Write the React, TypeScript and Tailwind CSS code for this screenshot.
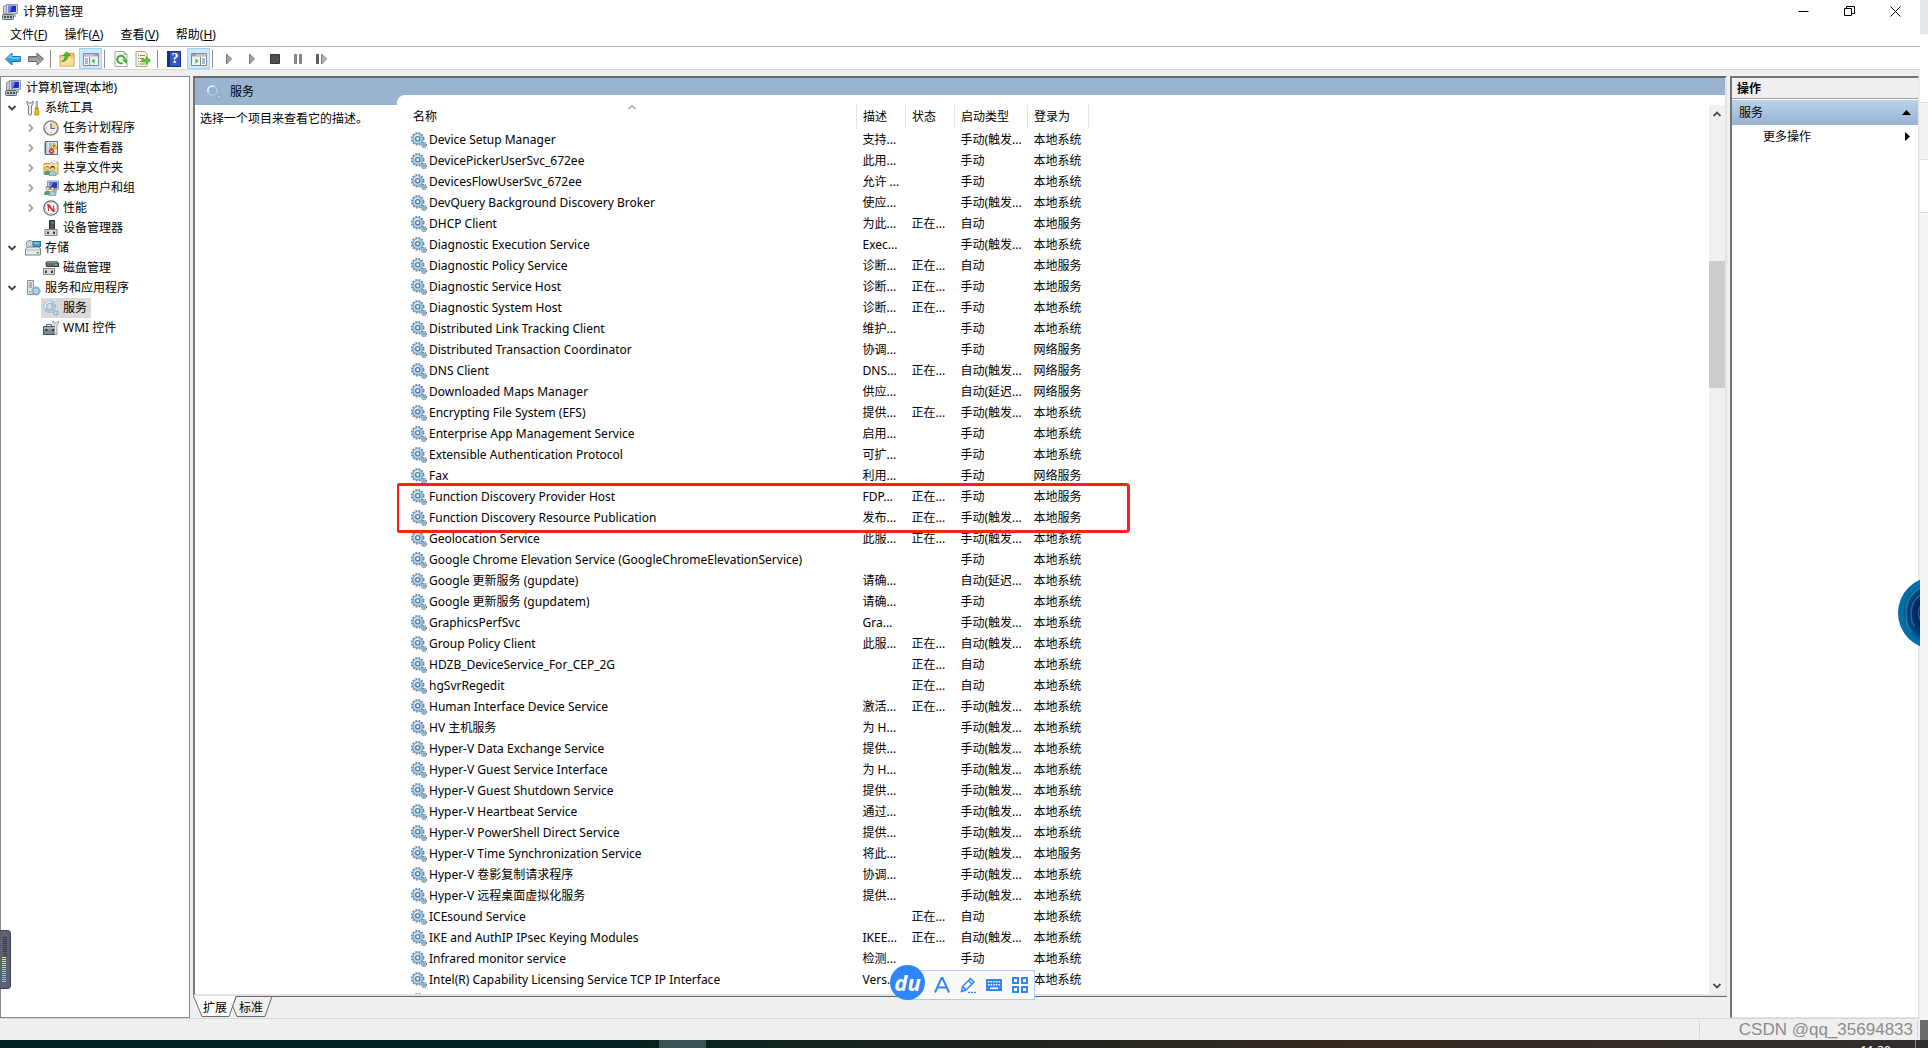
import React, { FunctionComponent, ReactNode } from "react";
import clsx from "clsx";

type IconComponent = FunctionComponent<{ className?: string }>;

const Svg: FunctionComponent<{ className?: string; children: ReactNode }> = ({
  className,
  children,
}) => (
  <svg
    viewBox="0 0 16 16"
    className={clsx("w-4 h-4 shrink-0", className)}
    fill="none"
    aria-hidden="true"
  >
    {children}
  </svg>
);

const ComputerIcon: IconComponent = (props) => (
  <Svg {...props}>
    <path d="M1.5 2.5 5 1v8.5L1.5 10.5z" fill="#c9ced2" stroke="#8d9296" />
    <path d="M4.500 .5h11v9l-11 .500z" fill="#d9dadb" stroke="#9a9da0" />
    <path d="M6 1.800h8v6L6 8.5z" fill="#1b2bd0" />
    <path d="M6 1.800h4L8 8.300 6 8.5z" fill="#6f8bf2" />
    <path d="M12 10h2v3h-2z" fill="#aeb3b7" />
    <rect x="0.5" y="10.5" width="11" height="5" rx="1" fill="#b3c0c6" stroke="#5d6a72" />
    <path d="M2 12h2v2H2zM5 12h2v2H5zM8 12h2v2H8z" fill="#41505a" />
  </Svg>
);

const ToolsIcon: IconComponent = (props) => (
  <Svg {...props}>
    <path
      d="M2 1v3l1.500 2v8.500q1.500 1.500 3 0V6L8 4V1L6.500 3h-3z"
      fill="#e5e7e8"
      stroke="#7c8184"
    />
    <path d="M11 1.500h1.500V8H11z" fill="#dfe3e6" stroke="#8b8f92" strokeWidth="0.8" />
    <path d="M10 8h3.500l-.500 2 .800 1.500V15H9.800v-3.500l.700-1.500z" fill="#f3b81d" stroke="#b07b05" strokeWidth="0.8" />
  </Svg>
);

const ClockIcon: IconComponent = (props) => (
  <Svg {...props}>
    <circle cx="8" cy="8" r="7" fill="#f3f1e6" stroke="#85898c" strokeWidth="1.600" />
    <path d="M8 8V2.200A5.800 5.800 0 0 1 13.800 8z" fill="#f5d58a" />
    <path d="M8 3.500V8.500h4" stroke="#4c6e93" strokeWidth="1.200" />
    <path d="M3 8h1M8 12v1" stroke="#888" />
  </Svg>
);

const EventIcon: IconComponent = (props) => (
  <Svg {...props}>
    <path d="M2.500 1.500h12v13h-12z" fill="#b9c9dd" stroke="#5b6f8c" />
    <path d="M4.500 2h9.500v12H4.500z" fill="#dde6f0" />
    <path d="M1 3h2M1 5h2M1 7h2M1 9h2M1 11h2M1 13h2" stroke="#56657a" />
    <path d="M6 4h3M6 6h2M6 8h3" stroke="#6e8bb5" />
    <path d="m11 3 3 5.500H8z" fill="#f8d22d" stroke="#b8860b" strokeWidth="0.600" />
    <path d="M11 5v2" stroke="#333" />
    <circle cx="8.500" cy="11.300" r="2.700" fill="#d8343a" />
    <path d="m7.500 10.300 2 2m0-2-2 2" stroke="#fff" strokeWidth="0.800" />
  </Svg>
);

const UserPair = () => (
  <>
    <circle cx="4.500" cy="8" r="2" fill="#9a6b43" />
    <circle cx="4.500" cy="8.600" r="1.500" fill="#f0c9a0" />
    <path d="M1 15q0-4.500 3.500-4.500T8 15z" fill="#55a06c" />
    <circle cx="9.500" cy="8" r="2.200" fill="#4b3a2a" />
    <circle cx="9.500" cy="8.800" r="1.600" fill="#f0c9a0" />
    <path d="M6 15.500q0-4.500 3.500-4.500t3.500 4.500z" fill="#a9cbe2" stroke="#477594" strokeWidth="0.500" />
  </>
);

const SharedFolderIcon: IconComponent = (props) => (
  <Svg {...props}>
    <path d="M1 3.500h6L8.500 2H15v12H1z" fill="#f4d67c" stroke="#c89a35" />
    <path d="M9 1h5v2.500H9z" fill="#fff" stroke="#9bb8ce" strokeWidth="0.600" />
    <path d="M1.500 5h13v2h-13z" fill="#fbeab0" />
    <UserPair />
  </Svg>
);

const UsersIcon: IconComponent = (props) => (
  <Svg {...props}>
    <path d="M4.500 1h11v8.500h-11z" fill="#d4d6d8" stroke="#999ea2" />
    <path d="M6 2.200h8.200v6H6z" fill="#2138cf" />
    <path d="M6 2.200h4l-2 6H6z" fill="#6c8af0" />
    <path d="M10 10h4v3h-4z" fill="#b1b6ba" />
    <UserPair />
  </Svg>
);

const PerformanceIcon: IconComponent = (props) => (
  <Svg {...props}>
    <circle cx="8" cy="8" r="7.200" fill="#fff" stroke="#666b6e" strokeWidth="1.300" />
    <circle cx="8" cy="8" r="5.600" stroke="#b4b8ba" strokeWidth="0.700" />
    <path d="m4.500 4.500 1.500 0 4.500 6V5.500l1 5.800-1.500.500L5.500 6v5z" fill="#d5141c" stroke="#d5141c" strokeWidth="0.600" />
  </Svg>
);

const DeviceIcon: IconComponent = (props) => (
  <Svg {...props}>
    <path d="M6.500.500h5v9h-5z" fill="#505457" stroke="#2e3133" />
    <path d="M9 2h1.500v1.500H9z" fill="#52e052" />
    <path d="M2 9.500h12v6H2z" fill="#d9dbdc" stroke="#7f8386" />
    <path d="M4 11.500h2V14H4zM10 11.500h2V14h-2z" fill="#3b3e40" />
  </Svg>
);

const StorageIcon: IconComponent = (props) => (
  <Svg {...props}>
    <circle cx="5" cy="4.500" r="4" fill="#d6dde2" stroke="#8b9398" />
    <circle cx="5" cy="4.500" r="1.200" fill="#fff" stroke="#8b9398" strokeWidth="0.600" />
    <path d="M8 1.500h7.500v5H8z" fill="#35a4d8" stroke="#1d6e98" />
    <path d="M9 3h5" stroke="#b5e5fa" />
    <path d="M.500 9 3 7h11l1.500 2v6H.500z" fill="#e7e9ea" stroke="#7f8588" />
    <path d="M1 10h14" stroke="#b1b5b7" />
    <path d="M11.500 12h2.500v1.500h-2.500z" fill="#2fc832" />
  </Svg>
);

const DiskIcon: IconComponent = (props) => (
  <Svg {...props}>
    <path d="m3 2.500 2-1h8.500l2 1.500v3.500h-12z" fill="#666a6d" stroke="#36393b" />
    <path d="M3.500 2.500 5 1.500h8l1.500 1z" fill="#b8bcbe" />
    <path d="M12 4h2v1.500h-2z" fill="#52e052" />
    <path d="M.500 8.500h11v6H.500z" fill="#d9dbdc" stroke="#7f8386" />
    <path d="M2 10.500h2V13H2zM8 10.500h2V13H8z" fill="#3b3e40" />
  </Svg>
);

const ServerIcon: IconComponent = (props) => (
  <Svg {...props}>
    <path d="M2.500.500h6v14h-6z" fill="#dfe3e5" stroke="#8a9195" />
    <path d="M4 3h3M4 5h3M4 7h3" stroke="#7b8488" />
    <path d="M4 11h1.500v1.500H4z" fill="#33c23b" />
    <circle cx="11" cy="11" r="3.200" fill="#dcecf7" stroke="#7ba6c6" strokeWidth="1.500" />
    <circle cx="11" cy="11" r="4.300" stroke="#7ba6c6" strokeDasharray="1.400 1.300" />
    <circle cx="11" cy="11" r="1.200" fill="#fff" stroke="#6b96b8" strokeWidth="0.700" />
  </Svg>
);

const GearIcon: IconComponent = (props) => (
  <Svg {...props}>
    <circle cx="6.700" cy="6.800" r="5.900" stroke="#5f87a4" strokeWidth="1.800" strokeDasharray="1.800 1.290" />
    <circle cx="6.700" cy="6.800" r="4.900" fill="#b2d4ee" stroke="#7ba4c2" strokeWidth="1.100" />
    <path d="M3.500 5.500A4 4 0 0 1 8 3" stroke="#e8f5fd" strokeWidth="1.200" />
    <circle cx="6.700" cy="6.800" r="2.100" fill="#fff" stroke="#4f7a9b" strokeWidth="1.300" />
    <circle cx="13" cy="13" r="2.400" fill="#b7cfe0" stroke="#64859d" strokeWidth="1.400" strokeDasharray="1.100 0.700" />
    <circle cx="13" cy="13" r="0.900" fill="#eef6fb" stroke="#64859d" strokeWidth="0.700" />
  </Svg>
);

const PaleGearIcon: IconComponent = (props) => (
  <Svg {...props}>
    <circle cx="6.500" cy="6.500" r="5.700" stroke="#86a9c2" strokeWidth="1.200" strokeDasharray="1.700 1.280" />
    <circle cx="6.500" cy="6.500" r="4.400" stroke="#a3cbe6" strokeWidth="2.400" />
    <path d="M2.400 8.500A4.400 4.400 0 0 1 8 2.400" stroke="#e6f4fc" strokeWidth="1.300" />
    <circle cx="6.500" cy="6.500" r="3.100" stroke="#7fa6c1" strokeWidth="0.700" />
    <circle cx="12.800" cy="13" r="2" stroke="#7e9fb6" strokeWidth="1.700" strokeDasharray="1.200 0.700" />
    <circle cx="12.800" cy="13" r="1.300" stroke="#b4d2e6" strokeWidth="0.800" />
  </Svg>
);

const WmiIcon: IconComponent = (props) => (
  <Svg {...props}>
    <path d="M3.500 6.500v-2h5v2" stroke="#555b60" />
    <path d="M.500 6.500h13v8H.500z" fill="#7c8a95" stroke="#444f58" />
    <path d="M1 7h12v2.500H1z" fill="#a3b1bc" />
    <path d="M2.500 9h2v2h-2zM9 9h2v2H9z" fill="#2d3439" />
    <path d="M10 1v2.500L11.500 5v9q1.500 1 2.500 0V5l1.500-1.500V1L14 2.800h-2.500z" fill="#e6e9eb" stroke="#7f868a" strokeWidth="0.700" />
  </Svg>
);

const ArrowIcon: FunctionComponent<{ forward?: boolean }> = ({ forward }) => (
  <Svg className={forward ? "rotate-180" : ""}>
    <path
      d="M.500 8 7 2v3.500h8.500v5H7V14z"
      fill={forward ? "#929292" : "#2ba5e8"}
      stroke={forward ? "#666" : "#1c71b4"}
    />
    <path d="M2 8 6 4v3h9" stroke={forward ? "#b8b8b8" : "#8bd9fb"} />
  </Svg>
);

const FolderUpIcon = () => (
  <Svg>
    <path d="M1 4.500h5l1.500-2H15v12.500H1z" fill="#f1cd76" stroke="#c79c42" />
    <path d="M1.500 7h13v7.500h-13z" fill="#f9df98" />
    <path d="M2.500 10.500Q6 9 6.500 4.500H4L7.500.800 11.500 4.500H9Q8.500 10.500 2.500 10.500z" fill="#4fc433" stroke="#278816" strokeWidth="0.600" />
  </Svg>
);

const PaneIcon: FunctionComponent<{ right?: boolean }> = ({ right }) => (
  <Svg className={right ? "-scale-x-100" : ""}>
    <path d="M.500 2.500h15v12H.500z" fill="#fff" stroke="#848a94" />
    <path d="M1 3h14v2.500H1z" fill="#9ba3af" />
    <path d="M1 4h10" stroke="#e2e6ec" />
    <path d="M6.500 6v8" stroke="#848a94" />
    <path d="M2 8h3M2 10h3M2 12h3" stroke="#4c75b8" />
    <path d="M7 6h8v8H7z" fill="#eef1f4" />
    <path d="m8.500 10 3-2.500v5z" fill="#43b824" />
  </Svg>
);

const RefreshIcon = () => (
  <Svg>
    <path d="M2 .500h9L14 3.500v12H2z" fill="#fcfcfc" stroke="#a4a4a4" />
    <path d="M11 .500v3h3" stroke="#a4a4a4" />
    <path d="M9.500 12A3.800 3.800 0 1 1 11.800 8.500" stroke="#43ad35" strokeWidth="2" />
    <path d="m8.500 8.500 5.500 0v4.500z" fill="#43ad35" />
  </Svg>
);

const ExportIcon = () => (
  <Svg>
    <path d="M1 .500h8.500L12 3v12.500H1z" fill="#fbf6dc" stroke="#aaa58c" />
    <path d="M3 4.500h1M5 4.500h5M3 7.500h1M5 7.500h4M3 10.500h1M5 10.500h4M3 13h1M5 13h5" stroke="#8a8570" />
    <path d="M7 8.300h4V5.500l4.700 4L11 13.500v-2.800H7z" fill="#58c93c" stroke="#3b9a25" strokeWidth="0.600" />
  </Svg>
);

const HelpIcon = () => (
  <span className="flex items-center justify-center w-[14px] h-4 bg-[#3658c5] border border-[#1c2f7d] border-l-[3px] text-white text-sm leading-4 font-bold font-['Liberation_Serif',serif]">
    ?
  </span>
);

const ChevronIcon: FunctionComponent<{ className?: string }> = ({ className }) => (
  <svg viewBox="0 0 10 10" className={clsx("w-[10px] h-[10px] shrink-0", className)} fill="none" aria-hidden="true">
    <path d="m1.500 3 3.500 3.500L8.500 3" stroke="currentColor" strokeWidth="1.800" />
  </svg>
);

const menus = [
  { label: "文件", key: "F" },
  { label: "操作", key: "A" },
  { label: "查看", key: "V" },
  { label: "帮助", key: "H" },
];

interface TreeNode {
  label: string;
  icon: IconComponent;
  level: number;
  state?: "open" | "closed";
  selected?: boolean;
}

const tree: TreeNode[] = [
  { label: "系统工具", icon: ToolsIcon, level: 1, state: "open" },
  { label: "任务计划程序", icon: ClockIcon, level: 2, state: "closed" },
  { label: "事件查看器", icon: EventIcon, level: 2, state: "closed" },
  { label: "共享文件夹", icon: SharedFolderIcon, level: 2, state: "closed" },
  { label: "本地用户和组", icon: UsersIcon, level: 2, state: "closed" },
  { label: "性能", icon: PerformanceIcon, level: 2, state: "closed" },
  { label: "设备管理器", icon: DeviceIcon, level: 2 },
  { label: "存储", icon: StorageIcon, level: 1, state: "open" },
  { label: "磁盘管理", icon: DiskIcon, level: 2 },
  { label: "服务和应用程序", icon: ServerIcon, level: 1, state: "open" },
  { label: "服务", icon: PaleGearIcon, level: 2, selected: true },
  { label: "WMI 控件", icon: WmiIcon, level: 2 },
];

const RUN = "正在...";
const MANUAL = "手动";
const AUTO = "自动";
const MANUAL_T = "手动(触发...";
const AUTO_T = "自动(触发...";
const AUTO_D = "自动(延迟...";
const SYS = "本地系统";
const LOCAL = "本地服务";
const NET = "网络服务";

// name, description, status, startup type, log on as
const services: string[][] = [
  ["Device Setup Manager", "支持...", "", MANUAL_T, SYS],
  ["DevicePickerUserSvc_672ee", "此用...", "", MANUAL, SYS],
  ["DevicesFlowUserSvc_672ee", "允许 ...", "", MANUAL, SYS],
  ["DevQuery Background Discovery Broker", "使应...", "", MANUAL_T, SYS],
  ["DHCP Client", "为此...", RUN, AUTO, LOCAL],
  ["Diagnostic Execution Service", "Exec...", "", MANUAL_T, SYS],
  ["Diagnostic Policy Service", "诊断...", RUN, AUTO, LOCAL],
  ["Diagnostic Service Host", "诊断...", RUN, MANUAL, LOCAL],
  ["Diagnostic System Host", "诊断...", RUN, MANUAL, SYS],
  ["Distributed Link Tracking Client", "维护...", "", MANUAL, SYS],
  ["Distributed Transaction Coordinator", "协调...", "", MANUAL, NET],
  ["DNS Client", "DNS...", RUN, AUTO_T, NET],
  ["Downloaded Maps Manager", "供应...", "", AUTO_D, NET],
  ["Encrypting File System (EFS)", "提供...", RUN, MANUAL_T, SYS],
  ["Enterprise App Management Service", "启用...", "", MANUAL, SYS],
  ["Extensible Authentication Protocol", "可扩...", "", MANUAL, SYS],
  ["Fax", "利用...", "", MANUAL, NET],
  ["Function Discovery Provider Host", "FDP...", RUN, MANUAL, LOCAL],
  ["Function Discovery Resource Publication", "发布...", RUN, MANUAL_T, LOCAL],
  ["Geolocation Service", "此服...", RUN, MANUAL_T, SYS],
  ["Google Chrome Elevation Service (GoogleChromeElevationService)", "", "", MANUAL, SYS],
  ["Google 更新服务 (gupdate)", "请确...", "", AUTO_D, SYS],
  ["Google 更新服务 (gupdatem)", "请确...", "", MANUAL, SYS],
  ["GraphicsPerfSvc", "Gra...", "", MANUAL_T, SYS],
  ["Group Policy Client", "此服...", RUN, AUTO_T, SYS],
  ["HDZB_DeviceService_For_CEP_2G", "", RUN, AUTO, SYS],
  ["hgSvrRegedit", "", RUN, AUTO, SYS],
  ["Human Interface Device Service", "激活...", RUN, MANUAL_T, SYS],
  ["HV 主机服务", "为 H...", "", MANUAL_T, SYS],
  ["Hyper-V Data Exchange Service", "提供...", "", MANUAL_T, SYS],
  ["Hyper-V Guest Service Interface", "为 H...", "", MANUAL_T, SYS],
  ["Hyper-V Guest Shutdown Service", "提供...", "", MANUAL_T, SYS],
  ["Hyper-V Heartbeat Service", "通过...", "", MANUAL_T, SYS],
  ["Hyper-V PowerShell Direct Service", "提供...", "", MANUAL_T, SYS],
  ["Hyper-V Time Synchronization Service", "将此...", "", MANUAL_T, LOCAL],
  ["Hyper-V 卷影复制请求程序", "协调...", "", MANUAL_T, SYS],
  ["Hyper-V 远程桌面虚拟化服务", "提供...", "", MANUAL_T, SYS],
  ["ICEsound Service", "", RUN, AUTO, SYS],
  ["IKE and AuthIP IPsec Keying Modules", "IKEE...", RUN, AUTO_T, SYS],
  ["Infrared monitor service", "检测...", "", MANUAL, SYS],
  ["Intel(R) Capability Licensing Service TCP IP Interface", "Vers...", "", MANUAL, SYS],
];

const TitleBar = () => (
  <header className="flex items-center h-[22px] pt-px pl-[2px] pr-[19px] shrink-0">
    <ComputerIcon />
    <h1 className="ml-[5px] flex-1 pt-px">计算机管理</h1>
    <div className="flex gap-[35px]">
      <button aria-label="最小化">
        <svg viewBox="0 0 11 11" className="w-[11px] h-[11px]" aria-hidden="true">
          <path d="M.500 5.500h10" stroke="#000" />
        </svg>
      </button>
      <button aria-label="还原">
        <svg viewBox="0 0 11 11" className="w-[11px] h-[11px]" fill="none" aria-hidden="true">
          <path d="M.500 2.500h7v7h-7zM2.500 2.500v-2h8v7h-3" stroke="#000" />
        </svg>
      </button>
      <button aria-label="关闭">
        <svg viewBox="0 0 11 11" className="w-[11px] h-[11px]" aria-hidden="true">
          <path d="m.500.500 10 10m0-10-10 10" stroke="#000" />
        </svg>
      </button>
    </div>
  </header>
);

const Divider = () => <span className="w-px h-[18px] bg-[#8d8d8d]" />;

const Toolbar = () => (
  <div className="flex items-center h-6 pt-px pl-[5px] border-t border-b border-t-[#b4b4b4] border-b-[#d7d7d7] shrink-0">
    <button aria-label="后退"><ArrowIcon /></button>
    <button aria-label="前进" className="ml-[7px] mr-[6px]"><ArrowIcon forward /></button>
    <Divider />
    <button aria-label="上一级" className="ml-2 mr-1"><FolderUpIcon /></button>
    <button aria-label="显示/隐藏控制台树" className="flex items-center justify-center w-[23px] h-[21px] bg-[#cce8ff] border border-[#99d1ff] mr-[2px]">
      <PaneIcon />
    </button>
    <Divider />
    <button aria-label="刷新" className="ml-2 mr-[6px]"><RefreshIcon /></button>
    <button aria-label="导出列表" className="mr-[6px]"><ExportIcon /></button>
    <Divider />
    <button aria-label="帮助" className="ml-[9px] mr-[6px]"><HelpIcon /></button>
    <button aria-label="显示/隐藏操作窗格" className="flex items-center justify-center w-[23px] h-[21px] bg-[#cce8ff] border border-[#99d1ff] mr-[2px]">
      <PaneIcon right />
    </button>
    <Divider />
    <div className="flex gap-[7px] ml-2">
      <button aria-label="启动">
        <Svg><path d="M5.500 3v10l5-5z" fill="#a5a5a5" stroke="#777" /></Svg>
      </button>
      <button aria-label="继续">
        <Svg><path d="M5.500 3v10l5-5z" fill="#a5a5a5" stroke="#777" /></Svg>
      </button>
      <button aria-label="停止">
        <Svg><path d="M3.500 3.500h9v9h-9z" fill="#4e4e4e" stroke="#333" /></Svg>
      </button>
      <button aria-label="暂停">
        <Svg><path d="M4.500 3.500h2v9h-2zM9.500 3.500h2v9h-2z" fill="#999" stroke="#777" /></Svg>
      </button>
      <button aria-label="重新启动">
        <Svg><path d="M3.500 3.500h2v9h-2z" fill="#666" stroke="#555" /><path d="M8.500 3v10l5-5z" fill="#bbb" stroke="#777" /></Svg>
      </button>
    </div>
  </div>
);

const ConsoleTree = () => (
  <nav className="w-[190px] shrink-0 bg-white border border-[#828790] pt-px">
    <div className="flex items-center h-5 pl-1 gap-[5px]">
      <ComputerIcon />
      <span>计算机管理(本地)</span>
    </div>
    <ul>
      {tree.map(({ label, icon: Icon, level, state, selected }) => (
        <li key={label} className={clsx("flex items-center h-5", level === 1 ? "pl-[6px]" : "pl-[25px]")}>
          <span className="w-[15px]">
            {state === "open" && <ChevronIcon className="text-[#404040]" />}
            {state === "closed" && <ChevronIcon className="-rotate-90 text-[#a6a6a6]" />}
          </span>
          <a
            href="#"
            className={clsx("flex items-center h-5 gap-1 pr-1", level === 1 ? "pl-[3px]" : "pl-[2px]", selected && "bg-[#d9d9d9]")}
          >
            <Icon />
            {label}
          </a>
        </li>
      ))}
    </ul>
  </nav>
);

const headers = ["描述", "状态", "启动类型", "登录为"];

const ServiceTable = () => (
  <div className="relative">
    <table className="table-fixed w-[692px] border-collapse text-left">
      <colgroup>
        <col />
        <col className="w-[49px]" />
        <col className="w-[49px]" />
        <col className="w-[73px]" />
        <col className="w-[61px]" />
      </colgroup>
      <thead>
        <tr className="h-6">
          <th className="relative pl-4 font-normal border-r border-[#e5e5e5]">
            名称
            <svg viewBox="0 0 8 4" className="absolute top-0 left-[231px] w-2 h-1" fill="none" aria-hidden="true">
              <path d="m.500 4 3.500-3.500L7.500 4" stroke="#555" />
            </svg>
          </th>
          {headers.map((header) => (
            <th key={header} className="pl-[6px] font-normal border-r border-[#e5e5e5] whitespace-nowrap">
              {header}
            </th>
          ))}
        </tr>
      </thead>
      <tbody>
        {services.map(([name, ...cells]) => (
          <tr key={name} className="h-[21px]">
            <td className="pl-[14px]">
              <span className="flex items-center gap-[2px] whitespace-nowrap">
                <GearIcon />
                {name}
              </span>
            </td>
            {cells.map((cell, i) => (
              <td key={i} className="pl-[6px] whitespace-nowrap">
                {cell}
              </td>
            ))}
          </tr>
        ))}
        <tr className="h-[21px]">
          <td className="pl-[14px]">
            <GearIcon />
          </td>
        </tr>
      </tbody>
    </table>
    {/* highlight round the two Function Discovery rows */}
    <div className="absolute top-[378px] -left-px w-[734px] h-[50px] border-[3px] border-[#fb2113] rounded" />
  </div>
);

const ScrollBar = () => (
  <div className="flex flex-col items-center w-4 shrink-0 bg-[#f0f0f0] text-[#505050]">
    <button aria-label="向上滚动" className="flex items-center justify-center w-4 h-[17px]">
      <ChevronIcon className="rotate-180" />
    </button>
    <div className="flex-1 w-full pt-[139px]">
      <div className="w-full h-[127px] bg-[#cdcdcd]" />
    </div>
    <button aria-label="向下滚动" className="flex items-center justify-center w-4 h-[17px]">
      <ChevronIcon />
    </button>
  </div>
);

const ViewTabs = () => (
  <div className="relative flex h-[22px] shrink-0 border-t border-[#696969]">
    <svg viewBox="0 0 80 21" className="absolute -top-px left-0 w-20 h-[21px]" fill="none" aria-hidden="true">
      <path d="M43 .500h36L72 20.500H44L39.500 10z" fill="#efefef" stroke="#696969" />
      <path d="M0 0h43L36 20.500H9z" fill="#fff" />
      <path d="M.500 0 9 20.500h27L43 .500" stroke="#696969" />
    </svg>
    <button className="relative pl-[10px]">扩展</button>
    <button className="relative pl-3">标准</button>
  </div>
);

const ServicesPane = () => (
  <main className="flex flex-col flex-1 min-w-0">
    <div className="flex flex-1 min-h-0 border-2 border-t-[#696969] border-l-[#757575] border-b-[#e3e3e3] border-r-[#e3e3e3] bg-[#99b4d1]">
      <section className="flex flex-col w-[202px] shrink-0">
        <h2 className="flex items-center h-[27px] pt-px pl-[11px] gap-2">
          <PaleGearIcon />
          服务
        </h2>
        <p className="flex-1 bg-white pl-[5px] pt-1 leading-5">选择一个项目来查看它的描述。</p>
      </section>
      <section className="flex flex-1 min-w-0 mt-[17px] pt-[10px] bg-white rounded-tl-lg">
        <div className="flex-1 min-w-0 overflow-hidden">
          <ServiceTable />
        </div>
        <ScrollBar />
      </section>
    </div>
    <ViewTabs />
  </main>
);

const ActionsPane = () => (
  <aside className="w-[189px] shrink-0 bg-white border-t-2 border-l-2 border-r border-b border-t-[#757575] border-l-[#757575] border-r-[#e3e3e3] border-b-[#e3e3e3]">
    <h2 className="h-[21px] pl-[5px] leading-[21px] font-bold bg-[#efefef] border-b border-[#a0a0a0]">操作</h2>
    <button className="flex items-center justify-between w-full h-[25px] mt-px px-[7px] bg-gradient-to-b from-[#b9d1ea] to-[#99b4d1]">
      服务
      <svg viewBox="0 0 9 5" className="w-[9px] h-[5px]" aria-hidden="true">
        <path d="M0 5 4.500 0 9 5z" />
      </svg>
    </button>
    <button className="flex items-center justify-between w-full h-[23px] pl-[31px] pr-2">
      更多操作
      <svg viewBox="0 0 5 9" className="w-[5px] h-[9px]" aria-hidden="true">
        <path d="m0 0 5 4.500L0 9z" />
      </svg>
    </button>
  </aside>
);

const InputToolbar = () => (
  <div className="absolute left-[890px] bottom-12 flex items-center h-[35px] text-[#2e86f7]">
    <span className="relative z-10 flex items-center justify-center w-[35px] h-[35px] rounded-full bg-[#2e86ff] text-white text-[22px] leading-none font-bold italic pb-px font-['Open_Sans',sans-serif]">
      du
    </span>
    <div className="flex items-center gap-[10px] h-[30px] mt-[5px] -ml-4 pl-6 pr-[6px] bg-[#fafafa] border border-[#aaccf9]">
      <button aria-label="中英文">
        <Svg><path d="M1 15.500 7.500 1h1L15 15.500M3.500 10.500h9" stroke="currentColor" strokeWidth="2" /></Svg>
      </button>
      <button aria-label="手写">
        <Svg>
          <path d="m1.500 14.500 1-5 8-8 3.500 3.500-8 8zM2.500 9.500 6 13M8.500 3.500 12 7" stroke="currentColor" strokeWidth="1.500" />
          <path d="M8 15.300h8" stroke="currentColor" strokeWidth="1.300" strokeDasharray="2 1" />
        </Svg>
      </button>
      <button aria-label="软键盘">
        <Svg>
          <path d="M0 2h16v12H0z" fill="currentColor" />
          <path d="M2 4.800h12M2 7.800h12" stroke="#fff" strokeWidth="1.500" strokeDasharray="1.500 1.100" />
          <path d="M4 11.300h8" stroke="#fff" strokeWidth="1.500" />
        </Svg>
      </button>
      <button aria-label="工具箱">
        <Svg><path d="M1 1h5v5H1zM10 1h5v5h-5zM1 10h5v5H1zM10 10h5v5h-5z" stroke="currentColor" strokeWidth="2" /></Svg>
      </button>
    </div>
  </div>
);

const meterColors = [
  "#e8e27a", "#e0e57c", "#d2e382", "#c3e28a", "#b1e093", "#a0de9c", "#90dda6",
  "#82dcb0", "#77dbba", "#70dac4", "#6cd9cd", "#6ad8d5", "#69d7dc",
];

const VolumeMeter = () => (
  <div className="absolute left-0 bottom-[51px] flex flex-col w-[11px] h-[59px] pt-[6px] pl-[2px] gap-px bg-[#5d6072] border border-l-0 border-[#3f4252] rounded-r">
    {Array.from({ length: 10 }, (_, i) => (
      <span key={i} className="w-1 h-px ml-px bg-[#343745]" />
    ))}
    {meterColors.map((color) => (
      <span key={color} className="w-1 h-px" style={{ backgroundColor: color }} />
    ))}
  </div>
);

const FloatingBall = () => (
  <svg viewBox="0 0 22 68" className="absolute right-0 top-[579px] w-[22px] h-[68px]" fill="none" aria-hidden="true">
    <defs>
      <radialGradient id="ball" gradientUnits="userSpaceOnUse" cx="36" cy="34" r="36">
        <stop offset="0.400" stopColor="#011c50" />
        <stop offset="0.700" stopColor="#043e78" />
        <stop offset="0.900" stopColor="#0173a8" />
        <stop offset="1" stopColor="#0867a8" />
      </radialGradient>
    </defs>
    <circle cx="36" cy="34" r="36" fill="url(#ball)" />
    <path d="M22 9Q8 17 8 34t6 18M22 16q-9 7-9 18t4 13M22 27q-3 7 0 14" stroke="#5f9cc8" strokeOpacity="0.450" strokeWidth="1.500" />
  </svg>
);

const App = () => (
  <div className="relative flex flex-col h-screen overflow-hidden bg-white text-black text-xs leading-4 font-['Noto_Sans','Noto_Sans_CJK_SC',sans-serif]">
    <div className="flex flex-1 min-h-0">
      <div className="relative flex flex-col flex-1 min-w-0 overflow-hidden">
        <TitleBar />
        <div className="flex items-center h-6 pt-px pl-[10px] gap-[17px] shrink-0">
          {menus.map(({ label, key }) => (
            <button key={key}>
              {label}(<u>{key}</u>)
            </button>
          ))}
        </div>
        <Toolbar />
        <div className="flex flex-1 min-h-0 gap-[3px] pt-[6px] pr-px bg-[#efefef]">
          <ConsoleTree />
          <ServicesPane />
          <ActionsPane />
        </div>
        <footer className="flex justify-end h-[22px] shrink-0 bg-[#efefef] border-t border-[#d7d7d7]">
          <div className="flex items-center w-[219px] my-px mr-[2px] justify-end pr-1 border-x border-[#d7d7d7] text-[17px] text-[#8c8c8c] font-['Liberation_Sans',sans-serif]">
            CSDN @qq_35694833
          </div>
        </footer>
        <VolumeMeter />
        <FloatingBall />
      </div>
      {/* windows showing behind, to the right */}
      <div className="flex flex-col w-2 shrink-0">
        <span className="h-[34px] bg-[#e5e9ee]" />
        <span className="h-[68px]" />
        <span className="h-[58px] bg-[#f3f3f3] border-y border-[#dcdcdc]" />
        <span className="h-[52px]" />
        <span className="flex-1 bg-[#f5f5f5] border-t border-[#dcdcdc]" />
        <span className="h-5 bg-[#6b6b6b]" />
      </div>
    </div>
    <div className="flex h-2 shrink-0 overflow-hidden bg-gradient-to-r from-[#02201f] from-30% via-[#33281f] via-70% to-[#302e2d]">
      <span className="w-[47px] ml-[659px] bg-[#3b5151]" />
      <span className="ml-auto pt-[3px] pr-6 text-white">11:39</span>
      <span className="w-px mr-3 bg-[#8a8a8a]" />
    </div>
    <InputToolbar />
  </div>
);

export default App;
